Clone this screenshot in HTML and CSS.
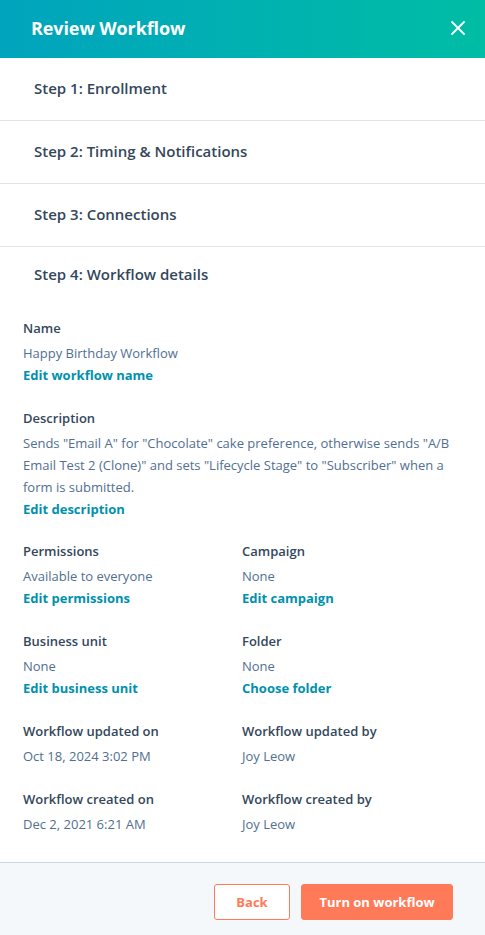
FILE: index.html
```html
<!DOCTYPE html>
<html lang="en">
<head>
  <meta charset="UTF-8">
  <meta name="viewport" content="width=device-width, initial-scale=1.0">
  <title>Review Workflow</title>
  <link rel="stylesheet" href="styles.css">
</head>
<body>
  <div class="panel">
    <header class="panel-header">
      <h1>Review Workflow</h1>
      <button class="close" aria-label="Close">
        <svg width="16" height="16" viewBox="0 0 16 16">
          <path d="M2 2 L14 14 M14 2 L2 14" stroke="#fff" stroke-width="1.8" stroke-linecap="round" fill="none"/>
        </svg>
      </button>
    </header>

    <div class="steps">
      <div class="step">Step 1: Enrollment</div>
      <div class="step">Step 2: Timing &amp; Notifications</div>
      <div class="step">Step 3: Connections</div>
      <div class="step open">
        <div class="step-title">Step 4: Workflow details</div>

        <div class="details">
          <div class="field">
            <div class="label">Name</div>
            <div class="value">Happy Birthday Workflow</div>
            <a class="link" href="#">Edit workflow name</a>
          </div>

          <div class="field description">
            <div class="label">Description</div>
            <div class="value">Sends "Email A" for "Chocolate" cake preference, otherwise sends "A/B Email Test 2 (Clone)" and sets "Lifecycle Stage" to "Subscriber" when a form is submitted.</div>
            <a class="link" href="#">Edit description</a>
          </div>

          <div class="grid">
            <div class="field">
              <div class="label">Permissions</div>
              <div class="value">Available to everyone</div>
              <a class="link" href="#">Edit permissions</a>
            </div>
            <div class="field">
              <div class="label">Campaign</div>
              <div class="value">None</div>
              <a class="link" href="#">Edit campaign</a>
            </div>
            <div class="field">
              <div class="label">Business unit</div>
              <div class="value">None</div>
              <a class="link" href="#">Edit business unit</a>
            </div>
            <div class="field">
              <div class="label">Folder</div>
              <div class="value">None</div>
              <a class="link" href="#">Choose folder</a>
            </div>
            <div class="field">
              <div class="label">Workflow updated on</div>
              <div class="value">Oct 18, 2024 3:02 PM</div>
            </div>
            <div class="field">
              <div class="label">Workflow updated by</div>
              <div class="value">Joy Leow</div>
            </div>
            <div class="field">
              <div class="label">Workflow created on</div>
              <div class="value">Dec 2, 2021 6:21 AM</div>
            </div>
            <div class="field">
              <div class="label">Workflow created by</div>
              <div class="value">Joy Leow</div>
            </div>
          </div>
        </div>
      </div>
    </div>

    <footer class="panel-footer">
      <button class="btn btn-secondary">Back</button>
      <button class="btn btn-primary">Turn on workflow</button>
    </footer>
  </div>
</body>
</html>
```

FILE: styles.css
```css
/* Global */
html, body {
  margin: 0;
  padding: 0;
}

body {
  font-family: 'Open Sans', 'Liberation Sans', sans-serif;
  color: #33475b;
  background: #fff;
}

.panel {
  display: flex;
  flex-direction: column;
  min-height: 935px;
}

/* Header */
.panel-header {
  height: 58px;
  display: flex;
  align-items: center;
  justify-content: space-between;
  padding: 0 16px 2px 31px;
  box-sizing: border-box;
  background: linear-gradient(to right, #00a4bd, #00bda5);
}

.panel-header h1 {
  margin: 0;
  font-size: 18px;
  font-weight: 700;
  color: #fff;
  letter-spacing: -0.1px;
}

.close {
  border: none;
  background: none;
  padding: 0;
  width: 22px;
  height: 22px;
  display: flex;
  align-items: center;
  justify-content: center;
  cursor: pointer;
}

/* Steps */
.steps {
  flex: 1;
}

.step {
  padding: 19px 34px 21px;
  font-size: 15px;
  font-weight: 600;
  line-height: 22px;
  border-bottom: 1px solid #dfe3eb;
}

.step.open {
  padding: 16px 0 0;
  border-bottom: none;
}

.step-title {
  padding: 0 34px;
}

.details {
  padding: 32px 23px 27px;
  font-weight: 400;
  font-size: 13px;
  line-height: 22px;
}

.field {
  display: flex;
  flex-direction: column;
  align-items: flex-start;
  margin-bottom: 21px;
}

.field.description {
  margin-bottom: 20px;
}

.grid .field {
  margin-bottom: 0;
}

.grid {
  display: grid;
  grid-template-columns: 219px 1fr;
  row-gap: 21px;
}

.label {
  font-weight: 600;
  color: #33475b;
  margin-bottom: 3px;
}

.value {
  color: #516f90;
}

.link {
  color: #0091ae;
  font-weight: 700;
  text-decoration: none;
}

/* Footer */
.panel-footer {
  display: flex;
  justify-content: flex-end;
  gap: 11px;
  padding: 21px 32px 16px;
  background: #f5f8fa;
  border-top: 1px solid #cbd6e2;
}

.btn {
  height: 36px;
  border-radius: 3px;
  font-family: inherit;
  font-size: 13px;
  font-weight: 700;
  cursor: pointer;
}

.btn-secondary {
  width: 76px;
  background: #fff;
  color: #ff7a59;
  border: 1px solid #ff7a59;
}

.btn-primary {
  width: 152px;
  background: #ff7a59;
  color: #fff;
  border: 1px solid #ff7a59;
}
```
